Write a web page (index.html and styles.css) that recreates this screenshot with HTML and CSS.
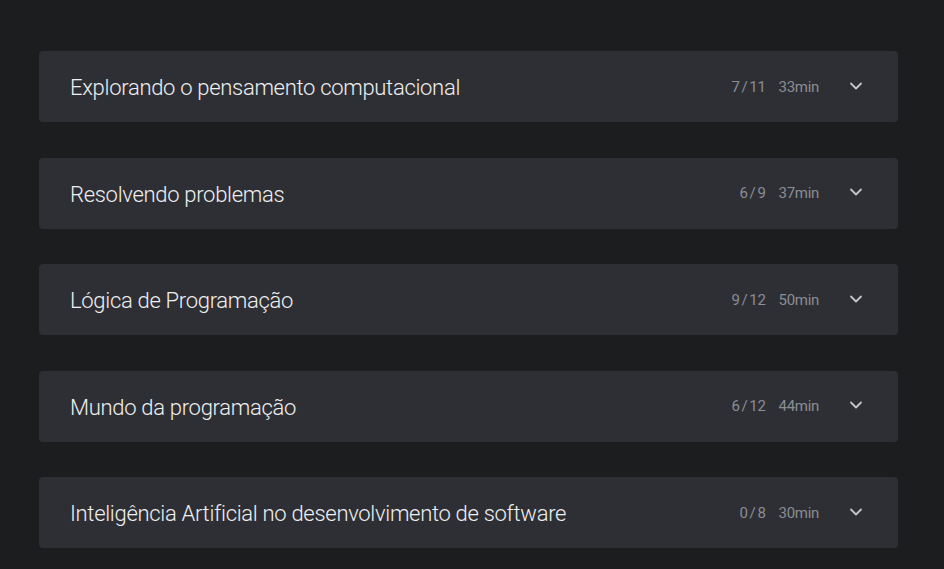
FILE: index.html
```html
<!DOCTYPE html>
<html>
<head>
	<title>Curso</title>
	<link rel="stylesheet" href="styles.css">
</head>
<body>
	<div class="sections">
		<div class="section">
			<span class="section-title">Explorando o pensamento computacional</span>
			<span class="section-meta"><span class="count">7 / 11</span><span class="time">33min</span></span>
			<svg class="chevron" width="14" height="14" viewBox="0 0 14 14"><path d="M2 4.5 L7 9.5 L12 4.5" fill="none" stroke="currentColor" stroke-width="1.8" stroke-linecap="round" stroke-linejoin="round"/></svg>
		</div>
		<div class="section">
			<span class="section-title">Resolvendo problemas</span>
			<span class="section-meta"><span class="count">6 / 9</span><span class="time">37min</span></span>
			<svg class="chevron" width="14" height="14" viewBox="0 0 14 14"><path d="M2 4.5 L7 9.5 L12 4.5" fill="none" stroke="currentColor" stroke-width="1.8" stroke-linecap="round" stroke-linejoin="round"/></svg>
		</div>
		<div class="section">
			<span class="section-title">Lógica de Programação</span>
			<span class="section-meta"><span class="count">9 / 12</span><span class="time">50min</span></span>
			<svg class="chevron" width="14" height="14" viewBox="0 0 14 14"><path d="M2 4.5 L7 9.5 L12 4.5" fill="none" stroke="currentColor" stroke-width="1.8" stroke-linecap="round" stroke-linejoin="round"/></svg>
		</div>
		<div class="section">
			<span class="section-title">Mundo da programação</span>
			<span class="section-meta"><span class="count">6 / 12</span><span class="time">44min</span></span>
			<svg class="chevron" width="14" height="14" viewBox="0 0 14 14"><path d="M2 4.5 L7 9.5 L12 4.5" fill="none" stroke="currentColor" stroke-width="1.8" stroke-linecap="round" stroke-linejoin="round"/></svg>
		</div>
		<div class="section">
			<span class="section-title">Inteligência Artificial no desenvolvimento de software</span>
			<span class="section-meta"><span class="count">0 / 8</span><span class="time">30min</span></span>
			<svg class="chevron" width="14" height="14" viewBox="0 0 14 14"><path d="M2 4.5 L7 9.5 L12 4.5" fill="none" stroke="currentColor" stroke-width="1.8" stroke-linecap="round" stroke-linejoin="round"/></svg>
		</div>
	</div>
</body>
</html>
```

FILE: styles.css
```css
body {
	margin: 0;
	background-color: #1c1d1f;
	font-family: Roboto, sans-serif;
}
.sections {
	display: flex;
	flex-direction: column;
	gap: 35.5px;
	width: 859px;
	margin: 0 0 0 39px;
	padding-top: 51px;
}
.section {
	display: flex;
	align-items: center;
	height: 71px;
	padding: 0 35px 0 31px;
	background-color: #2e2f34;
	border-radius: 4px;
	box-sizing: border-box;
}
.section-title {
	flex: 1;
	font-size: 22px;
	font-weight: 300;
	color: #f0f0f0;
	letter-spacing: -0.3px;
	padding-top: 2px;
}
.section-meta {
	display: flex;
	gap: 13px;
	font-size: 15px;
	color: #8a8d94;
	margin-right: 30px;
	letter-spacing: -0.3px;
}
.count {
	word-spacing: -1.5px;
}
.chevron {
	color: #c4c6cb;
	margin-top: -2px;
}
```
